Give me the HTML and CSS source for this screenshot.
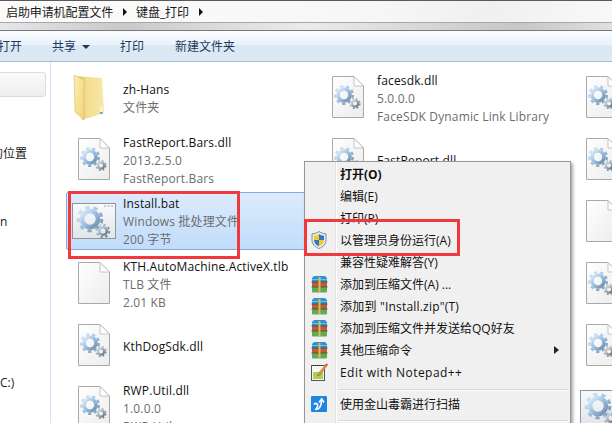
FILE: index.html
```html
<!DOCTYPE html>
<html lang="zh-CN">
<head>
    <meta charset="UTF-8">
    <meta name="viewport" content="width=device-width, initial-scale=1.0">
    <title>键盘_打印</title>
    <link rel="stylesheet" href="styles.css">
</head>
<body>

<svg class="defs" width="0" height="0">
    <defs>
        <linearGradient id="paper" x1="0" y1="0" x2="1" y2="1">
            <stop offset="0" stop-color="#ffffff"/>
            <stop offset="1" stop-color="#ececec"/>
        </linearGradient>
        <linearGradient id="steel" x1="0" y1="0" x2="1" y2="1">
            <stop offset="0" stop-color="#dcebf8"/>
            <stop offset="0.5" stop-color="#9cc0e2"/>
            <stop offset="1" stop-color="#6f8ca8"/>
        </linearGradient>
        <linearGradient id="steel-small" x1="0" y1="0" x2="1" y2="1">
            <stop offset="0" stop-color="#cfdbe5"/>
            <stop offset="1" stop-color="#5f7385"/>
        </linearGradient>
        <linearGradient id="frame" x1="0" y1="0" x2="0" y2="1">
            <stop offset="0" stop-color="#f8f9fa"/>
            <stop offset="1" stop-color="#e2e6ea"/>
        </linearGradient>
        <linearGradient id="folder-back" x1="0" y1="0" x2="1" y2="0">
            <stop offset="0" stop-color="#cfae55"/>
            <stop offset="0.4" stop-color="#f2dc8e"/>
            <stop offset="1" stop-color="#f8e9a6"/>
        </linearGradient>
        <linearGradient id="folder-leaf" x1="0" y1="0" x2="1" y2="1">
            <stop offset="0" stop-color="#fcefb0"/>
            <stop offset="1" stop-color="#f0d577"/>
        </linearGradient>
    </defs>
    <symbol id="page" viewBox="0 0 32 42">
        <path d="M.5.5H22L31.5 10V41.5H.5Z" fill="url(#paper)" stroke="#a9a9a9"/>
        <path d="M22 .5V10H31.5Z" fill="#fff" stroke="#c4c4c4"/>
    </symbol>
    <symbol id="gear-page" viewBox="0 0 32 42">
        <use href="#page" width="32" height="42"/>
        <circle cx="12" cy="19" r="6" fill="none" stroke="url(#steel)" stroke-width="3.600"/>
        <circle cx="12" cy="19" r="8.800" fill="none" stroke="url(#steel)" stroke-width="2.200" stroke-dasharray="3.200 3"/>
        <circle cx="23" cy="27.500" r="3" fill="none" stroke="url(#steel-small)" stroke-width="2"/>
        <circle cx="23" cy="27.500" r="4.800" fill="none" stroke="url(#steel-small)" stroke-width="1.500" stroke-dasharray="2 1.800"/>
    </symbol>
    <symbol id="gear-window" viewBox="0 0 44 36">
        <rect x=".5" y=".5" width="43" height="35" fill="url(#frame)" stroke="#8f959b"/>
        <path d="M32 3h2M35.500 3h2M39 3h2" stroke="#9aa0a6"/>
        <circle cx="18" cy="16" r="8" fill="none" stroke="url(#steel)" stroke-width="4.600"/>
        <circle cx="18" cy="16" r="11.800" fill="none" stroke="url(#steel)" stroke-width="3" stroke-dasharray="4.200 4.200"/>
        <circle cx="31" cy="28" r="3.800" fill="none" stroke="url(#steel-small)" stroke-width="2.600"/>
        <circle cx="31" cy="28" r="6.200" fill="none" stroke="url(#steel-small)" stroke-width="2" stroke-dasharray="2.500 2.300"/>
    </symbol>
    <symbol id="rar" viewBox="0 0 17 17">
        <path d="M1 2 3 0H14L16 2V6H1Z" fill="#2b93d6"/>
        <path d="M1 3.500H16" stroke="#6fbcea"/>
        <rect x="1" y="6" width="15" height="5" fill="#bf5a3c"/>
        <rect x="1" y="11" width="15" height="5.500" rx="1" fill="#63ab50"/>
        <path d="M.5 6H16.500M.5 11H16.500" stroke="#5d5230"/>
        <rect x="7.500" y="1" width="2" height="15" fill="#dcbb55"/>
    </symbol>
</svg>

<div class="window">
    <div class="address-bar">
        <span class="crumb">启助申请机配置文件</span>
        <span class="crumb-arrow"></span>
        <span class="crumb crumb-second">键盘_打印</span>
        <span class="crumb-arrow"></span>
    </div>
    <div class="strip"></div>
    <div class="toolbar">
        <span class="tool tool-open">打开</span>
        <span class="tool tool-share">共享<i class="tool-caret"></i></span>
        <span class="tool tool-print">打印</span>
        <span class="tool">新建文件夹</span>
    </div>

    <div class="main">
        <div class="sidebar">
            <div class="side-active"></div>
            <div class="side-item side-places">的位置</div>
            <div class="side-item side-n">n</div>
            <div class="side-item side-drive">C:)</div>
        </div>

        <div class="files">
            <div class="tile">
                <div class="tile-icon">
                    <svg class="folder-icon" width="32" height="46" viewBox="0 0 32 46">
                        <path d="M1 2 29 4 31 39 9 46Z" fill="url(#folder-back)"/>
                        <path d="M1 1 11 6V46L2 38Z" fill="url(#folder-leaf)" stroke="#d8bd6a" stroke-width=".6"/>
                        <rect x="27" y="33" width="2.500" height="7" fill="#f7f3dc"/>
                        <rect x="27" y="38" width="2.500" height="2" fill="#5c9bd6"/>
                    </svg>
                </div>
                <div class="tile-text"><div class="name">zh-Hans</div><div class="meta">文件夹</div></div>
            </div>
            <div class="tile">
                <div class="tile-icon"><svg width="32" height="42"><use href="#gear-page"/></svg></div>
                <div class="tile-text"><div class="name">facesdk.dll</div><div class="meta">5.0.0.0</div><div class="meta">FaceSDK Dynamic Link Library</div></div>
            </div>
            <div class="tile">
                <div class="tile-icon"><svg width="32" height="42"><use href="#gear-page"/></svg></div>
            </div>

            <div class="tile">
                <div class="tile-icon"><svg width="32" height="42"><use href="#gear-page"/></svg></div>
                <div class="tile-text"><div class="name">FastReport.Bars.dll</div><div class="meta">2013.2.5.0</div><div class="meta">FastReport.Bars</div></div>
            </div>
            <div class="tile">
                <div class="tile-icon"><svg width="32" height="42"><use href="#gear-page"/></svg></div>
                <div class="tile-text"><div class="name">FastReport.dll</div></div>
            </div>
            <div class="tile">
                <div class="tile-icon"><svg width="32" height="42"><use href="#gear-page"/></svg></div>
            </div>

            <div class="tile tile-selected">
                <div class="tile-icon"><svg width="44" height="36"><use href="#gear-window"/></svg></div>
                <div class="tile-text"><div class="name">Install.bat</div><div class="meta">Windows 批处理文件</div><div class="meta">200 字节</div></div>
            </div>
            <div class="tile"></div>
            <div class="tile">
                <div class="tile-icon"><svg width="32" height="42"><use href="#page"/></svg></div>
            </div>

            <div class="tile">
                <div class="tile-icon"><svg width="32" height="42"><use href="#page"/></svg></div>
                <div class="tile-text"><div class="name">KTH.AutoMachine.ActiveX.tlb</div><div class="meta">TLB 文件</div><div class="meta">2.01 KB</div></div>
            </div>
            <div class="tile"></div>
            <div class="tile">
                <div class="tile-icon"><svg width="32" height="42"><use href="#gear-page"/></svg></div>
            </div>

            <div class="tile">
                <div class="tile-icon"><svg width="32" height="42"><use href="#gear-page"/></svg></div>
                <div class="tile-text"><div class="name">KthDogSdk.dll</div></div>
            </div>
            <div class="tile"></div>
            <div class="tile">
                <div class="tile-icon"><svg width="32" height="42"><use href="#gear-page"/></svg></div>
            </div>

            <div class="tile">
                <div class="tile-icon"><svg width="32" height="42"><use href="#gear-page"/></svg></div>
                <div class="tile-text"><div class="name">RWP.Util.dll</div><div class="meta">1.0.0.0</div><div class="meta">RWP.Util</div></div>
            </div>
            <div class="tile"></div>
            <div class="tile tile-top">
                <div class="tile-icon"><svg width="44" height="36"><use href="#gear-window"/></svg></div>
            </div>
        </div>
    </div>

    <div class="menu">
        <div class="menu-item menu-bold"><span class="menu-icon"></span>打开(O)</div>
        <div class="menu-item"><span class="menu-icon"></span>编辑(E)</div>
        <div class="menu-item"><span class="menu-icon"></span>打印(P)</div>
        <div class="menu-item">
            <span class="menu-icon">
                <svg width="16" height="18" viewBox="0 0 16 18">
                    <path d="M8 .5C10 2 12.500 2.800 15 2.800V9C15 13 12 16 8 17.500 4 16 1 13 1 9V2.800C3.500 2.800 6 2 8 .5Z" fill="#e8ecef" stroke="#7f8a94"/>
                    <path d="M8 3C9.500 4 11 4.500 13 4.700V9H8Z" fill="#2f78c8"/>
                    <path d="M8 3C6.500 4 5 4.500 3 4.700V9H8Z" fill="#f4c92e"/>
                    <path d="M3 9H8V15.300C5 14 3 12 3 9Z" fill="#2f78c8"/>
                    <path d="M13 9H8V15.300C11 14 13 12 13 9Z" fill="#f4c92e"/>
                </svg>
            </span>以管理员身份运行(A)
        </div>
        <div class="menu-item"><span class="menu-icon"></span>兼容性疑难解答(Y)</div>
        <div class="menu-item"><span class="menu-icon"><svg width="17" height="17"><use href="#rar"/></svg></span>添加到压缩文件(A) ...</div>
        <div class="menu-item"><span class="menu-icon"><svg width="17" height="17"><use href="#rar"/></svg></span><span class="menu-latin-sm">添加到 "Install.zip"(T)</span></div>
        <div class="menu-item"><span class="menu-icon"><svg width="17" height="17"><use href="#rar"/></svg></span>添加到压缩文件并发送给QQ好友</div>
        <div class="menu-item"><span class="menu-icon"><svg width="17" height="17"><use href="#rar"/></svg></span>其他压缩命令<i class="menu-arrow"></i></div>
        <div class="menu-item">
            <span class="menu-icon">
                <svg width="17" height="18" viewBox="0 0 17 18">
                    <rect x=".5" y="2.500" width="13" height="15" fill="#f6f6ee" stroke="#55585a"/>
                    <path d="M2 2.500h1M4 2.500h1M6 2.500h1M8 2.500h1M10 2.500h1" stroke="#222"/>
                    <rect x="2" y="9" width="10" height="7" fill="#a9cf5e"/>
                    <path d="M7 11 15 1 16.500 2 9 12 6.500 13Z" fill="#e0a030" stroke="#a5541d" stroke-width=".5"/>
                    <path d="M14.500 1.500 15.500 .5 16.800 1.500 16 2.500Z" fill="#c8352a"/>
                </svg>
            </span><span class="menu-latin">Edit with Notepad++</span>
        </div>
        <div class="menu-sep"></div>
        <div class="menu-item">
            <span class="menu-icon">
                <svg width="16" height="16" viewBox="0 0 16 16">
                    <rect width="16" height="16" rx="1" fill="#1c86e0"/>
                    <path d="M3 8.500C3.500 7 6 7 6.500 8.500 7 10.500 5.500 13 4 13.200M4.500 13.200C7.500 14 10.500 11 10.500 4.500" fill="none" stroke="#fff" stroke-width="1.600"/>
                    <path d="M8 6.500 10.700 3 13 6.500" fill="none" stroke="#fff" stroke-width="1.600"/>
                </svg>
            </span>使用金山毒霸进行扫描
        </div>
        <div class="menu-sep menu-sep-last"></div>
    </div>

    <div class="mark mark-file"></div>
    <div class="mark mark-admin"></div>
</div>

</body>
</html>
```

FILE: styles.css
```css
body {
    margin: 0;
    font-family: "Open Sans", "Noto Sans CJK SC", sans-serif;
    font-size: 12px;
    color: #1a1a1a;
}

.defs {
    position: absolute;
}

.window {
    position: relative;
    width: 612px;
    height: 423px;
    overflow: hidden;
    background: #fff;
}

.address-bar {
    height: 21px;
    border-top: 1px solid #5a5a5a;
    display: flex;
    align-items: center;
    padding-left: 6px;
    letter-spacing: -0.1px;
    background: linear-gradient(to right, #fbfbfb, #f7f7f7 60%, #f0f0f0 80%, #f8f8f8);
}

.crumb-arrow {
    width: 0;
    height: 0;
    margin-left: 10px;
    margin-right: 9px;
    border-left: 4px solid #111;
    border-top: 4px solid transparent;
    border-bottom: 4px solid transparent;
}

.strip {
    height: 7px;
    border-top: 1px solid #a8a8a8;
    border-bottom: 1px solid #6f7a85;
    background: linear-gradient(to right, #e6e6e6, #c9c9c9 20%, #ebebeb 50%, #c6c6c6 85%, #e0e0e0);
}

.toolbar {
    height: 30px;
    box-sizing: content-box;
    border-bottom: 1px solid #a9bbd2;
    display: flex;
    align-items: center;
    background: linear-gradient(to bottom, #fbfdff, #e9f1fa 45%, #dce7f4 50%, #dde8f5);
    color: #1e3a5f;
}

.tool {
    padding-top: 2px;
    line-height: 28px;
}

.tool-open {
    margin-left: -2px;
    margin-right: 30px;
}

.tool-share {
    margin-right: 30px;
    display: flex;
    align-items: center;
}

.tool-print {
    margin-right: 31px;
}

.tool-caret {
    width: 0;
    height: 0;
    margin-left: 6px;
    border-top: 4px solid #1e3a5f;
    border-left: 4px solid transparent;
    border-right: 4px solid transparent;
}

.main {
    display: flex;
    height: 361px;
}

.sidebar {
    width: 50px;
    flex-shrink: 0;
    border-right: 1px solid #d6e5f5;
    overflow: hidden;
}

.side-active {
    width: 48px;
    height: 23px;
    margin-top: 10px;
    margin-left: -4px;
    border: 1px solid #dcdcdc;
    border-radius: 3px;
    background: linear-gradient(to bottom, #fafafa, #eeeeee);
}

.side-item {
    line-height: 18px;
    white-space: nowrap;
}

.side-places {
    margin-top: 48px;
    margin-left: -9px;
}

.side-n {
    margin-top: 50px;
}

.side-drive {
    margin-top: 143px;
}

.files {
    flex: 1;
    display: grid;
    grid-template-columns: repeat(3, 250px);
    grid-auto-rows: 58px;
    column-gap: 4px;
    row-gap: 4px;
    padding-top: 6px;
    padding-left: 15px;
}

.tile {
    display: flex;
    align-items: center;
    padding-left: 6px;
    box-sizing: border-box;
    white-space: nowrap;
}

.tile-top {
    align-items: flex-start;
    padding-top: 12px;
}

.tile-selected {
    padding-left: 5px;
    border: 1px solid #84acdd;
    border-radius: 2px;
    background: linear-gradient(to bottom, #dcebfc, #c1dcfb);
}

.tile-icon {
    width: 44px;
    display: flex;
    justify-content: center;
    flex-shrink: 0;
}

.tile-icon svg {
    display: block;
}

.folder-icon {
    margin-right: 10px;
}

.tile-text {
    margin-left: 7px;
    padding-top: 4px;
    line-height: 18px;
    letter-spacing: 0.15px;
}

.tile-selected .tile-text {
    padding-top: 2px;
}

.name {
    color: #111;
}

.meta {
    color: #6d6d6d;
}

.menu {
    position: absolute;
    left: 304px;
    top: 161px;
    width: 267px;
    height: 270px;
    box-sizing: border-box;
    border: 1px solid #979797;
    padding: 1px 0 0 0;
    background: linear-gradient(to right, #f0f0f0 30px, #e2e3e3 30px, #e2e3e3 31px, #fff 31px, #fff 32px, #f0f0f0 32px);
    box-shadow: 2px 2px 3px rgba(0, 0, 0, 0.35);
}

.menu-item {
    height: 22px;
    display: flex;
    align-items: center;
    color: #111;
    white-space: nowrap;
}

.menu-bold {
    font-weight: bold;
}

.menu-latin {
    letter-spacing: 0.45px;
}

.menu-latin-sm {
    letter-spacing: 0.2px;
}

.menu-icon {
    width: 35px;
    flex-shrink: 0;
    padding-left: 6px;
    box-sizing: border-box;
    display: flex;
    align-items: center;
}

.menu-icon svg {
    display: block;
}

.menu-arrow {
    width: 0;
    height: 0;
    margin-left: auto;
    margin-right: 11px;
    border-left: 5px solid #222;
    border-top: 4px solid transparent;
    border-bottom: 4px solid transparent;
}

.menu-sep {
    height: 1px;
    margin: 6px 2px 2px 33px;
    background: #d7d7d7;
    border-bottom: 1px solid #fff;
}

.menu-sep-last {
    margin-top: 5px;
}

.mark {
    position: absolute;
    box-sizing: border-box;
    border: 3px solid #f0393d;
}

.mark-file {
    left: 68px;
    top: 191px;
    width: 172px;
    height: 68px;
}

.mark-admin {
    left: 304px;
    top: 219px;
    width: 156px;
    height: 37px;
}
```
